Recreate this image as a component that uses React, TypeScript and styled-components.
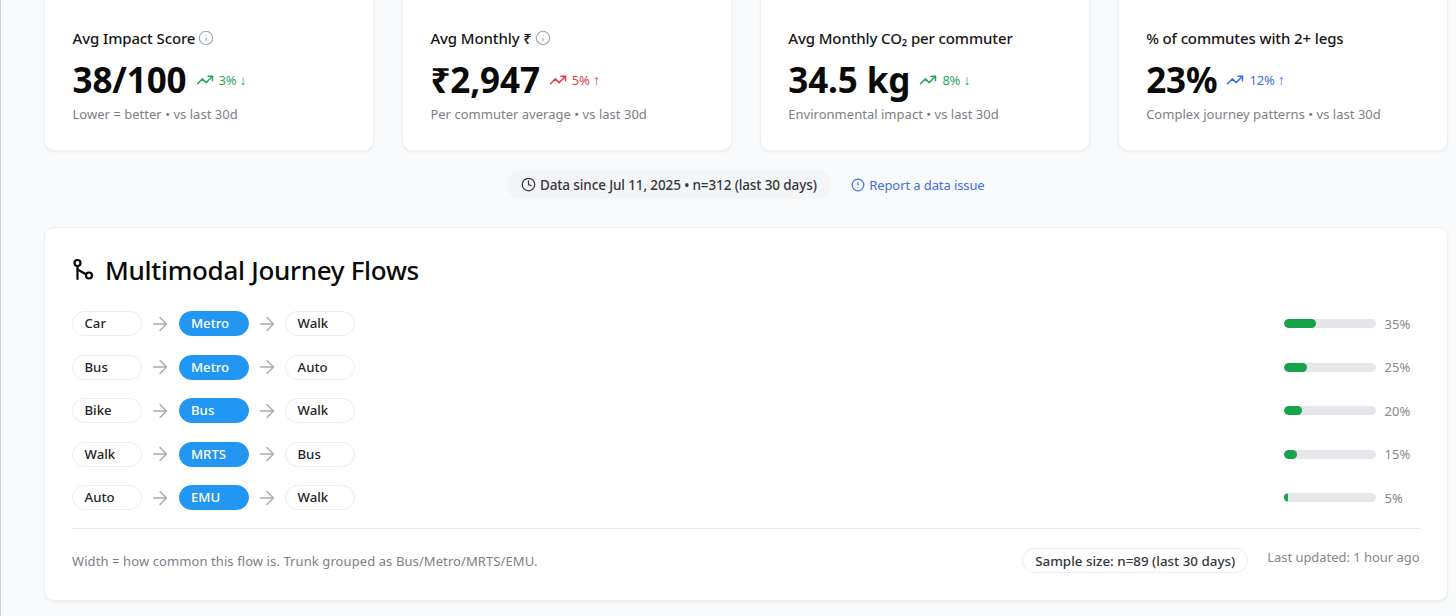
import React from "react"
import styled, { createGlobalStyle } from "styled-components"
import { ArrowRight, CircleAlert, Clock, Info, TrendingUp } from "lucide-react"

const GlobalStyle = createGlobalStyle`
  html, body {
    margin: 0;
    height: 100%;
    overflow: hidden;
    background: #f9fafb;
  }
  body {
    font-family: "Noto Sans", "Open Sans", sans-serif;
    color: #0a0a0a;
  }
`

type Tone = "green" | "red" | "blue"

const toneColors: Record<Tone, string> = {
  green: "#2ea55c",
  red: "#dc3f4b",
  blue: "#3f6fe0",
}

const stats: {
  title: string
  info: boolean
  value: string
  change: string
  dir: string
  tone: Tone
  note: string
}[] = [
  { title: "Avg Impact Score", info: true, value: "38/100", change: "3%", dir: "↓", tone: "green", note: "Lower = better • vs last 30d" },
  { title: "Avg Monthly ₹", info: true, value: "₹2,947", change: "5%", dir: "↑", tone: "red", note: "Per commuter average • vs last 30d" },
  { title: "Avg Monthly CO₂ per commuter", info: false, value: "34.5 kg", change: "8%", dir: "↓", tone: "green", note: "Environmental impact • vs last 30d" },
  { title: "% of commutes with 2+ legs", info: false, value: "23%", change: "12%", dir: "↑", tone: "blue", note: "Complex journey patterns • vs last 30d" },
]

const flows = [
  { from: "Car", trunk: "Metro", to: "Walk", share: 35 },
  { from: "Bus", trunk: "Metro", to: "Auto", share: 25 },
  { from: "Bike", trunk: "Bus", to: "Walk", share: 20 },
  { from: "Walk", trunk: "MRTS", to: "Bus", share: 15 },
  { from: "Auto", trunk: "EMU", to: "Walk", share: 5 },
]

// the title glyph: one stem with a branch running to a second stop
const JourneyIcon = () => (
  <svg width="22" height="24" viewBox="0 0 22 24" fill="none" stroke="currentColor" strokeWidth="2.2" strokeLinecap="round">
    <circle cx="5.5" cy="5" r="3" />
    <path d="M5.5 8v13" />
    <path d="M5.5 11.5l8 4.5" />
    <circle cx="17" cy="17.5" r="3" />
  </svg>
)

const App = () => {
  return (
    <Page>
      <GlobalStyle />
      <StatGrid>
        {stats.map((stat) => (
          <StatCard key={stat.value}>
            <StatTitle>
              {stat.title}
              {stat.info && <Info size={16} color="#9ca3af" strokeWidth={1.6} />}
            </StatTitle>
            <StatRow>
              <StatValue>{stat.value}</StatValue>
              <Change $tone={stat.tone}>
                <TrendingUp size={18} strokeWidth={2} />
                <span>{stat.change} <DirArrow>{stat.dir}</DirArrow></span>
              </Change>
            </StatRow>
            <StatNote>{stat.note}</StatNote>
          </StatCard>
        ))}
      </StatGrid>

      <StatusRow>
        <DataBadge>
          <Clock size={15} strokeWidth={2} />
          Data since Jul 11, 2025 • n=312 (last 30 days)
        </DataBadge>
        <ReportLink>
          <CircleAlert size={14} strokeWidth={2} />
          Report a data issue
        </ReportLink>
      </StatusRow>

      <FlowCard>
        <FlowTitle>
          <JourneyIcon />
          Multimodal Journey Flows
        </FlowTitle>
        <FlowList>
          {flows.map((flow) => (
            <FlowRow key={flow.from}>
              <Chain>
                <Pill>{flow.from}</Pill>
                <ArrowRight size={22} color="#a8abb0" strokeWidth={1.5} />
                <Pill $trunk>{flow.trunk}</Pill>
                <ArrowRight size={22} color="#a8abb0" strokeWidth={1.5} />
                <Pill>{flow.to}</Pill>
              </Chain>
              <Share>
                <BarTrack>
                  <BarFill style={{ width: `${flow.share}%` }} />
                </BarTrack>
                <ShareLabel>{flow.share}%</ShareLabel>
              </Share>
            </FlowRow>
          ))}
        </FlowList>
        <FlowFooter>
          <FooterNote>Width = how common this flow is. Trunk grouped as Bus/Metro/MRTS/EMU.</FooterNote>
          <FooterMeta>
            <SampleBadge>Sample size: n=89 (last 30 days)</SampleBadge>
            <Updated>Last updated: 1 hour ago</Updated>
          </FooterMeta>
        </FlowFooter>
      </FlowCard>
    </Page>
  )
}

const Page = styled.div`
  box-sizing: border-box;
  width: 1456px;
  height: 616px;
  overflow: hidden;
  padding: 0 8.5px 0 44px;
  position: relative;
  background: #f9fafb;

  &::before {
    content: "";
    position: absolute;
    left: 0;
    top: 0;
    bottom: 0;
    width: 1px;
    background: #c9cdd8;
  }
`

const StatGrid = styled.div`
  display: grid;
  grid-template-columns: repeat(4, 1fr);
  gap: 28px;
  margin-top: -20px;
`

const StatCard = styled.div`
  box-sizing: border-box;
  height: 171px;
  padding: 45.5px 27.5px 0;
  background: #fff;
  border: 1px solid #eef0f3;
  border-radius: 10px;
  box-shadow: 0 1px 3px rgba(0, 0, 0, 0.06);
`

const StatTitle = styled.div`
  display: flex;
  align-items: center;
  gap: 3px;
  height: 22px;
  font-size: 15px;
  font-weight: 500;
  letter-spacing: -0.12px;
  color: #171717;
`

const StatRow = styled.div`
  display: flex;
  align-items: center;
  gap: 9px;
  margin-top: 9.5px;
  height: 44px;
`

const StatValue = styled.div`
  font-size: 35px;
  font-weight: 700;
  line-height: 44px;
  letter-spacing: -0.1px;
  color: #0a0a0a;
`

const Change = styled.div<{ $tone: Tone }>`
  display: flex;
  align-items: center;
  gap: 5px;
  font-size: 13px;
  letter-spacing: -0.2px;
  color: ${({ $tone }) => toneColors[$tone]};
`

const DirArrow = styled.span`
  font-family: "Liberation Sans", sans-serif;
  font-size: 14px;
`

const StatNote = styled.div`
  margin-top: 1px;
  font-size: 13px;
  line-height: 22px;
  letter-spacing: 0.02px;
  color: #7d8086;
`

const StatusRow = styled.div`
  display: flex;
  justify-content: center;
  align-items: center;
  gap: 20px;
  margin-top: 19px;
  height: 29px;
`

const DataBadge = styled.div`
  display: flex;
  align-items: center;
  gap: 4px;
  height: 29px;
  padding: 0 14px;
  border-radius: 14px;
  background: #f4f5f6;
  font-size: 13.5px;
  font-weight: 500;
  letter-spacing: -0.12px;
  color: #33363b;
`

const ReportLink = styled.a`
  display: flex;
  align-items: center;
  gap: 4.5px;
  font-size: 13px;
  letter-spacing: -0.1px;
  color: #3f6fe0;
`

const FlowCard = styled.div`
  box-sizing: border-box;
  height: 373.5px;
  margin-top: 28px;
  padding: 26px 27px 0;
  background: #fff;
  border: 1px solid #eef0f3;
  border-radius: 10px;
  box-shadow: 0 1px 3px rgba(0, 0, 0, 0.06);
`

const FlowTitle = styled.h2`
  display: flex;
  align-items: center;
  gap: 11px;
  height: 32px;
  margin: 0;
  font-size: 26px;
  font-weight: 500;
  letter-spacing: -0.3px;
  color: #0a0a0a;
`

const FlowList = styled.div`
  display: flex;
  flex-direction: column;
  gap: 18.5px;
  margin-top: 25px;
`

const FlowRow = styled.div`
  display: flex;
  align-items: center;
  justify-content: space-between;
  height: 25px;
`

const Chain = styled.div`
  display: flex;
  align-items: center;
  gap: 7.25px;
`

const Pill = styled.div<{ $trunk?: boolean }>`
  box-sizing: border-box;
  width: 70px;
  height: 25px;
  padding-left: 11.5px;
  border-radius: 13px;
  border: 1px solid ${({ $trunk }) => ($trunk ? "#2196f3" : "#eceef1")};
  background: ${({ $trunk }) => ($trunk ? "#2196f3" : "#fff")};
  color: ${({ $trunk }) => ($trunk ? "#fff" : "#262626")};
  font-size: 13.2px;
  font-weight: 500;
  line-height: 23px;
`

const Share = styled.div`
  display: flex;
  align-items: center;
  gap: 9px;
`

const BarTrack = styled.div`
  width: 92px;
  height: 9px;
  border-radius: 5px;
  background: #e5e7eb;
  overflow: hidden;
`

const BarFill = styled.div`
  height: 100%;
  border-radius: 5px;
  background: #16a34a;
`

const ShareLabel = styled.div`
  width: 35px;
  font-size: 13px;
  color: #85888d;
`

const FlowFooter = styled.div`
  display: flex;
  align-items: flex-start;
  justify-content: space-between;
  margin-top: 17.5px;
  padding-top: 19px;
  border-top: 1px solid #e7e8ea;
`

const FooterNote = styled.div`
  margin-top: 3px;
  font-size: 13px;
  line-height: 20px;
  letter-spacing: 0.09px;
  color: #7d8086;
`

const FooterMeta = styled.div`
  display: flex;
  align-items: flex-start;
  gap: 19px;
`

const SampleBadge = styled.div`
  box-sizing: border-box;
  height: 25px;
  padding: 0 12px;
  border: 1px solid #eceef1;
  border-radius: 13px;
  font-size: 13.4px;
  font-weight: 500;
  line-height: 24px;
  color: #33363b;
`

const Updated = styled.div`
  font-size: 13px;
  line-height: 18px;
  letter-spacing: -0.04px;
  color: #85888d;
`

export default App
